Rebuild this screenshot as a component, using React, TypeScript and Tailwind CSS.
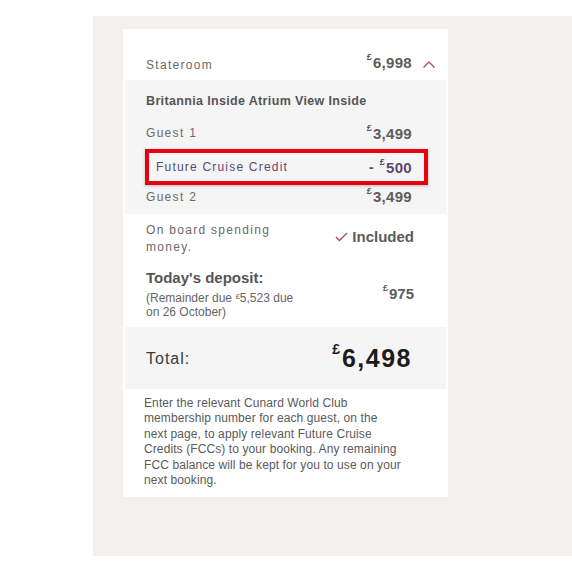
import React from "react";

function Price({ value, className }: { value: string; className?: string }) {
    return (
        <span className={"inline-flex items-start " + (className ?? "")}>
            <span className="text-[9px] leading-none mr-[1px] -mt-[2px]">£</span>
            <span className="leading-none">{value}</span>
        </span>
    );
}

export default function App() {
    return (
        <div className="w-[572px] h-[572px] bg-white pt-[16px] pl-[93px] font-['Liberation_Sans',Arial,sans-serif]">
            <div className="w-[479px] h-[540px] bg-[#f3f0ed] pt-[13px] pl-[30px]">
                <div className="w-[325px] bg-white text-[#5f5f5f]">
                    <div className="h-[51px] flex items-end pl-[23px] pr-[12px] pb-[9px]">
                        <span className="text-[12px] tracking-[1.3px] text-[#6a6a6a] leading-none">Stateroom</span>
                        <Price value="6,998" className="ml-auto text-[15px] font-bold text-[#5c5c5c] tracking-[0.3px] mb-[1px]" />
                        <svg className="ml-[10px] mb-[2px]" width="14" height="9" viewBox="0 0 14 9" fill="none">
                            <path d="M1.5 7.5 L7 2 L12.5 7.5" stroke="#b05070" strokeWidth="1.4" />
                        </svg>
                    </div>
                    <div className="mx-[2px] bg-[#f5f5f5] pt-[12px] pb-[7px]">
                        <div className="pl-[21px] text-[12.5px] font-bold tracking-[0.35px] text-[#555] leading-[18px]">
                            Britannia Inside Atrium View Inside
                        </div>
                        <div className="h-[32px] mt-[7px] flex items-center pl-[21px] pr-[34px]">
                            <span className="text-[12px] tracking-[1.3px] text-[#6a6a6a]">Guest 1</span>
                            <Price value="3,499" className="ml-auto text-[15px] font-bold text-[#5c5c5c] tracking-[0.3px]" />
                        </div>
                        <div className="ml-[20px] mr-[18px] h-[36px] border-[4px] border-[#e8000e] shadow-[0_1px_3px_rgba(0,0,0,0.25)] flex items-center pl-[7px] pr-[12px]">
                            <span className="text-[12px] tracking-[1.2px] text-[#5a4a6e]">Future Cruise Credit</span>
                            <span className="ml-auto flex items-start text-[#5a4a6e] font-bold">
                                <span className="text-[14px] mr-[6px] leading-none">-</span>
                                <Price value="500" className="text-[15px] tracking-[0.3px]" />
                            </span>
                        </div>
                        <div className="h-[22px] flex items-center pl-[21px] pr-[34px] pt-[1px]">
                            <span className="text-[12px] tracking-[1.3px] text-[#6a6a6a]">Guest 2</span>
                            <Price value="3,499" className="ml-auto text-[15px] font-bold text-[#5c5c5c] tracking-[0.3px]" />
                        </div>
                    </div>
                    <div className="flex items-center pl-[23px] pr-[34px] pt-[8px]">
                        <span className="w-[150px] text-[12px] tracking-[1.3px] leading-[17px] text-[#6a6a6a]">
                            On board spending money.
                        </span>
                        <span className="ml-auto flex items-center gap-[4px] text-[15px] font-bold text-[#5c5c5c] -mt-[4px]">
                            <svg width="13" height="10" viewBox="0 0 13 10" fill="none">
                                <path d="M1 5 L4.5 8.5 L12 1" stroke="#a04a68" strokeWidth="1.4" />
                            </svg>
                            Included
                        </span>
                    </div>
                    <div className="flex items-center pl-[23px] pr-[34px] pt-[12px] pb-[8px]">
                        <div className="flex flex-col">
                            <span className="text-[15px] font-bold text-[#555] leading-[19px]">Today's deposit:</span>
                            <span className="text-[12px] leading-[14px] text-[#666] mt-[3px] w-[160px]">
                                (Remainder due <span className="text-[8px] align-[3px]">£</span>5,523 due on 26 October)
                            </span>
                        </div>
                        <Price value="975" className="ml-auto text-[15px] font-bold text-[#5c5c5c]" />
                    </div>
                    <div className="mx-[2px] h-[62px] bg-[#f5f5f5] flex items-center pl-[21px] pr-[34px]">
                        <span className="text-[16px] tracking-[1px] text-[#3a3a3a] mt-[2px]">Total:</span>
                        <span className="ml-auto inline-flex items-start text-[#1c1c1c] font-bold">
                            <span className="text-[14px] leading-none -mt-[4px] mr-[2px]">£</span>
                            <span className="text-[25px] leading-none tracking-[1.5px]">6,498</span>
                        </span>
                    </div>
                    <p className="pl-[21px] pr-[6px] pt-[7px] pb-[9px] text-[12px] tracking-[0.1px] leading-[15.4px] text-[#5a5a5a]">
                        Enter the relevant Cunard World Club<br />
                        membership number for each guest, on the<br />
                        next page, to apply relevant Future Cruise<br />
                        Credits (FCCs) to your booking. Any remaining<br />
                        FCC balance will be kept for you to use on your<br />
                        next booking.
                    </p>
                </div>
            </div>
        </div>
    );
}
